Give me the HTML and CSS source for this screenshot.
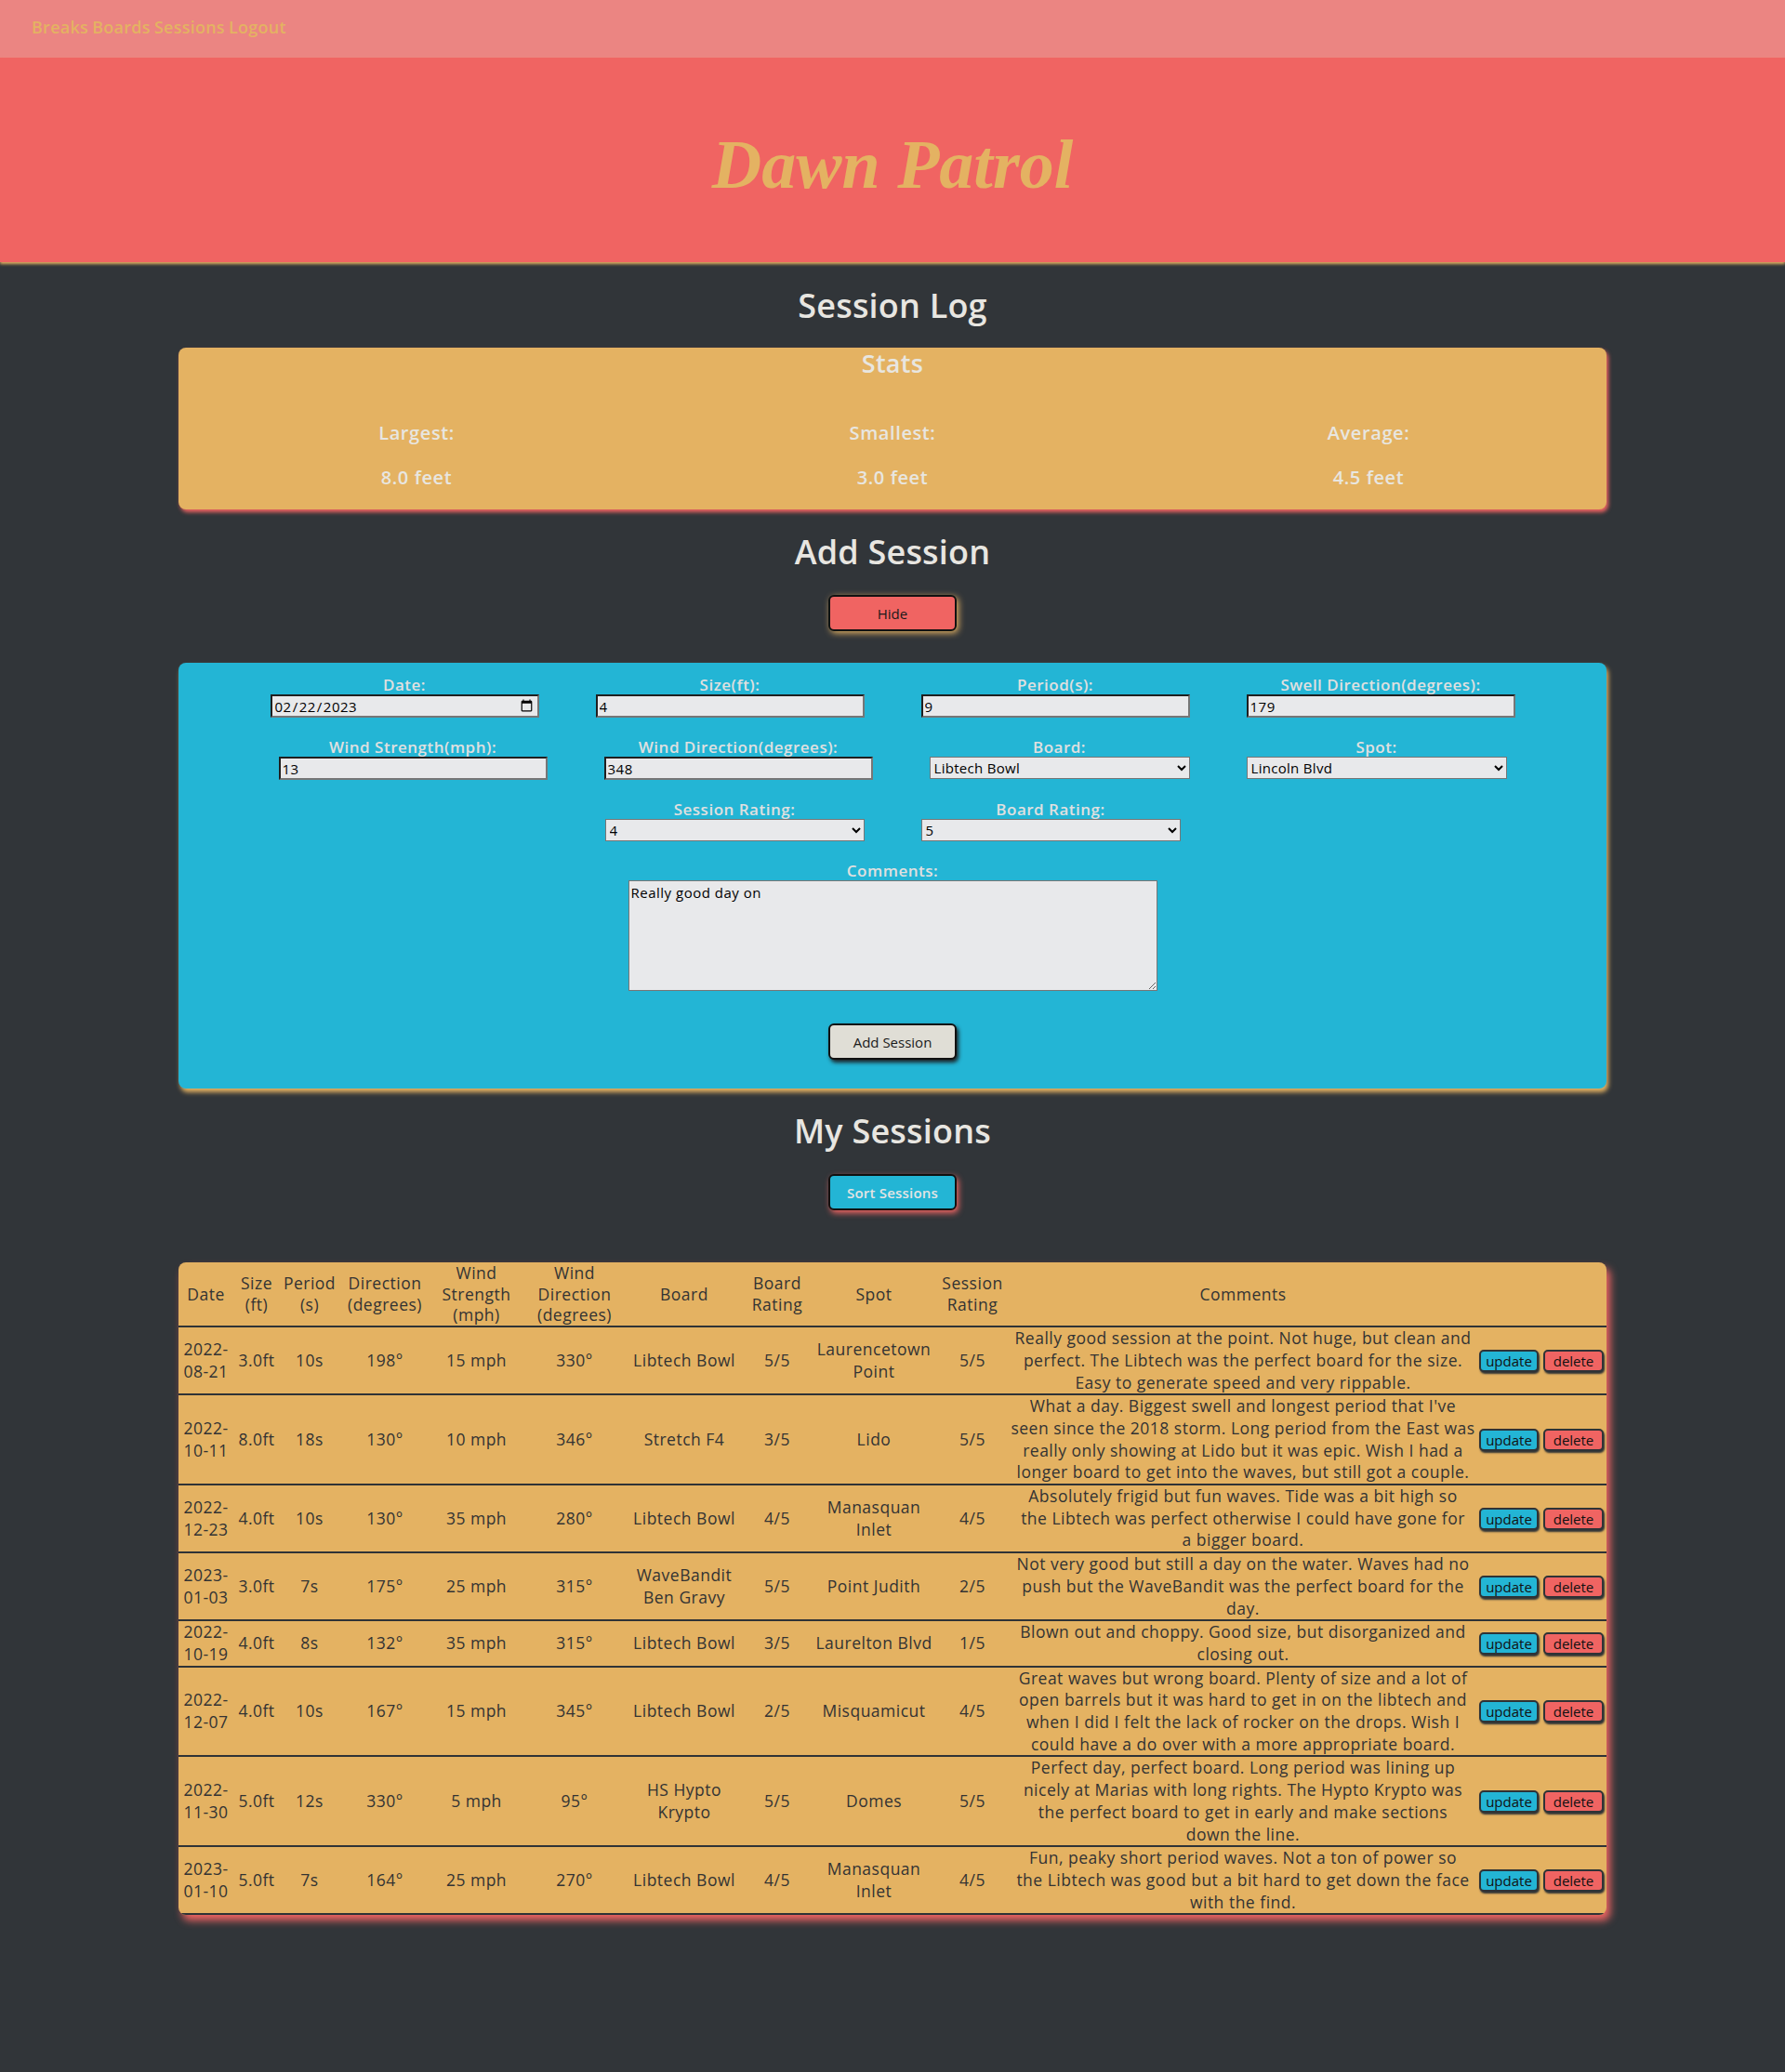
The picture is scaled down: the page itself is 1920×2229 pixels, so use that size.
FILE: index.html
```html
<!DOCTYPE html>
<html lang="en">
<head>
<meta charset="utf-8">
<title>Dawn Patrol</title>
<link rel="stylesheet" href="styles.css">
</head>
<body>
<nav class="topnav">
  <a class="nav-link" href="#">Breaks</a> <a class="nav-link" href="#">Boards</a> <a class="nav-link" href="#">Sessions</a> <a class="nav-link" href="#">Logout</a>
</nav>
<header class="banner">
  <h1 class="brand">Dawn Patrol</h1>
</header>
<main class="page">
  <h2 class="section-title title-log">Session Log</h2>
  <section class="stats-card">
    <h3 class="stats-title">Stats</h3>
    <div class="stats-grid">
      <div class="stat"><p class="stat-label">Largest:</p><p class="stat-value">8.0 feet</p></div>
      <div class="stat"><p class="stat-label">Smallest:</p><p class="stat-value">3.0 feet</p></div>
      <div class="stat"><p class="stat-label">Average:</p><p class="stat-value">4.5 feet</p></div>
    </div>
  </section>

  <h2 class="section-title">Add Session</h2>
  <div class="btn-row"><button class="btn btn-hide" type="button">Hide</button></div>

  <form class="session-form">
    <div class="form-row">
      <div class="field"><label class="field-label">Date:</label><input class="control" type="date" value="2023-02-22"></div>
      <div class="field"><label class="field-label">Size(ft):</label><input class="control" type="text" value="4"></div>
      <div class="field"><label class="field-label">Period(s):</label><input class="control" type="text" value="9"></div>
      <div class="field"><label class="field-label">Swell Direction(degrees):</label><input class="control" type="text" value="179"></div>
    </div>
    <div class="form-row">
      <div class="field"><label class="field-label">Wind Strength(mph):</label><input class="control" type="text" value="13"></div>
      <div class="field"><label class="field-label">Wind Direction(degrees):</label><input class="control" type="text" value="348"></div>
      <div class="field"><label class="field-label">Board:</label><select class="picker"><option>Libtech Bowl</option></select></div>
      <div class="field"><label class="field-label">Spot:</label><select class="picker"><option>Lincoln Blvd</option></select></div>
    </div>
    <div class="form-row">
      <div class="field"><label class="field-label">Session Rating:</label><select class="picker picker-sm"><option>4</option></select></div>
      <div class="field"><label class="field-label">Board Rating:</label><select class="picker picker-sm"><option>5</option></select></div>
    </div>
    <div class="form-row">
      <div class="field"><label class="field-label">Comments:</label><textarea class="comments-box">Really good day on</textarea></div>
    </div>
    <div class="btn-row btn-row-form"><button class="btn btn-add" type="button">Add Session</button></div>
  </form>

  <h2 class="section-title">My Sessions</h2>
  <div class="btn-row"><button class="btn btn-sort" type="button">Sort Sessions</button></div>

  <div class="table-card">
    <table class="sessions">
      <thead>
        <tr>
          <th class="c-date">Date</th>
          <th class="c-size">Size (ft)</th>
          <th class="c-period">Period (s)</th>
          <th class="c-dir">Direction (degrees)</th>
          <th class="c-ws">Wind Strength (mph)</th>
          <th class="c-wd">Wind Direction (degrees)</th>
          <th class="c-board">Board</th>
          <th class="c-br">Board Rating</th>
          <th class="c-spot">Spot</th>
          <th class="c-sr">Session Rating</th>
          <th class="c-comments">Comments</th>
          <th class="c-actions"></th>
        </tr>
      </thead>
      <tbody>
        <tr>
          <td>2022-08-21</td><td>3.0ft</td><td>10s</td><td>198°</td><td>15 mph</td><td>330°</td><td>Libtech Bowl</td><td>5/5</td><td>Laurencetown Point</td><td>5/5</td>
          <td>Really good session at the point. Not huge, but clean and<br>perfect. The Libtech was the perfect board for the size.<br>Easy to generate speed and very rippable.</td>
          <td><div class="actions"><button class="row-btn row-update" type="button">update</button><button class="row-btn row-delete" type="button">delete</button></div></td>
        </tr>
        <tr>
          <td>2022-10-11</td><td>8.0ft</td><td>18s</td><td>130°</td><td>10 mph</td><td>346°</td><td>Stretch F4</td><td>3/5</td><td>Lido</td><td>5/5</td>
          <td>What a day. Biggest swell and longest period that I've<br>seen since the 2018 storm. Long period from the East was<br>really only showing at Lido but it was epic. Wish I had a<br>longer board to get into the waves, but still got a couple.</td>
          <td><div class="actions"><button class="row-btn row-update" type="button">update</button><button class="row-btn row-delete" type="button">delete</button></div></td>
        </tr>
        <tr>
          <td>2022-12-23</td><td>4.0ft</td><td>10s</td><td>130°</td><td>35 mph</td><td>280°</td><td>Libtech Bowl</td><td>4/5</td><td>Manasquan Inlet</td><td>4/5</td>
          <td>Absolutely frigid but fun waves. Tide was a bit high so<br>the Libtech was perfect otherwise I could have gone for<br>a bigger board.</td>
          <td><div class="actions"><button class="row-btn row-update" type="button">update</button><button class="row-btn row-delete" type="button">delete</button></div></td>
        </tr>
        <tr>
          <td>2023-01-03</td><td>3.0ft</td><td>7s</td><td>175°</td><td>25 mph</td><td>315°</td><td>WaveBandit Ben Gravy</td><td>5/5</td><td>Point Judith</td><td>2/5</td>
          <td>Not very good but still a day on the water. Waves had no<br>push but the WaveBandit was the perfect board for the<br>day.</td>
          <td><div class="actions"><button class="row-btn row-update" type="button">update</button><button class="row-btn row-delete" type="button">delete</button></div></td>
        </tr>
        <tr>
          <td>2022-10-19</td><td>4.0ft</td><td>8s</td><td>132°</td><td>35 mph</td><td>315°</td><td>Libtech Bowl</td><td>3/5</td><td>Laurelton Blvd</td><td>1/5</td>
          <td>Blown out and choppy. Good size, but disorganized and<br>closing out.</td>
          <td><div class="actions"><button class="row-btn row-update" type="button">update</button><button class="row-btn row-delete" type="button">delete</button></div></td>
        </tr>
        <tr>
          <td>2022-12-07</td><td>4.0ft</td><td>10s</td><td>167°</td><td>15 mph</td><td>345°</td><td>Libtech Bowl</td><td>2/5</td><td>Misquamicut</td><td>4/5</td>
          <td>Great waves but wrong board. Plenty of size and a lot of<br>open barrels but it was hard to get in on the libtech and<br>when I did I felt the lack of rocker on the drops. Wish I<br>could have a do over with a more appropriate board.</td>
          <td><div class="actions"><button class="row-btn row-update" type="button">update</button><button class="row-btn row-delete" type="button">delete</button></div></td>
        </tr>
        <tr>
          <td>2022-11-30</td><td>5.0ft</td><td>12s</td><td>330°</td><td>5 mph</td><td>95°</td><td>HS Hypto Krypto</td><td>5/5</td><td>Domes</td><td>5/5</td>
          <td>Perfect day, perfect board. Long period was lining up<br>nicely at Marias with long rights. The Hypto Krypto was<br>the perfect board to get in early and make sections<br>down the line.</td>
          <td><div class="actions"><button class="row-btn row-update" type="button">update</button><button class="row-btn row-delete" type="button">delete</button></div></td>
        </tr>
        <tr>
          <td>2023-01-10</td><td>5.0ft</td><td>7s</td><td>164°</td><td>25 mph</td><td>270°</td><td>Libtech Bowl</td><td>4/5</td><td>Manasquan Inlet</td><td>4/5</td>
          <td>Fun, peaky short period waves. Not a ton of power so<br>the Libtech was good but a bit hard to get down the face<br>with the find.</td>
          <td><div class="actions"><button class="row-btn row-update" type="button">update</button><button class="row-btn row-delete" type="button">delete</button></div></td>
        </tr>
      </tbody>
    </table>
  </div>
</main>
</body>
</html>
```
FILE: styles.css
```css
* { box-sizing: border-box; }

html, body {
  margin: 0;
  padding: 0;
  background: #313539;
}

body {
  font-family: "Open Sans", Lato, sans-serif;
  color: #333;
  min-height: 2229px;
}

/* top nav */
.topnav {
  height: 62px;
  background: #eb8582;
  padding: 18px 0 0 34px;
  line-height: 22px;
}
.nav-link {
  color: #e4b262;
  font-size: 18px;
  font-weight: 600;
  letter-spacing: 0.25px;
  text-decoration: none;
}

/* banner */
.banner {
  height: 220px;
  background: #f06462;
  box-shadow: 0 2px 3px #e4b262;
  padding-top: 78px;
  text-align: center;
}
.brand {
  margin: 0;
  font-family: "Liberation Serif", "DejaVu Serif", serif;
  font-style: italic;
  font-weight: 700;
  font-size: 74px;
  line-height: 1;
  color: #e4b262;
}

/* page */
.page {
  width: 80%;
  margin: 0 auto;
}

.section-title {
  margin: 24px 0 25px;
  font-size: 36px;
  line-height: 43px;
  font-weight: 600;
  letter-spacing: 0.2px;
  text-align: center;
  color: #e8e6e1;
}
.title-log {
  margin-top: 25px;
  margin-bottom: 24px;
}

/* stats */
.stats-card {
  background: #e4b262;
  border-radius: 8px;
  padding: 1px 0 23px;
  box-shadow: 2px 3px 4px #f06462;
  color: #e8e6e0;
  text-align: center;
}
.stats-title {
  margin: 0;
  font-size: 27px;
  line-height: 32px;
  font-weight: 600;
  letter-spacing: 0.3px;
}
.stats-grid {
  display: grid;
  grid-template-columns: repeat(3, 1fr);
  margin-top: 48px;
}
.stat-label,
.stat-value {
  margin: 0;
  font-size: 20px;
  line-height: 22px;
  font-weight: 600;
  letter-spacing: 0.6px;
}
.stat-value {
  margin-top: 26px;
}

/* buttons */
.btn-row {
  display: flex;
  justify-content: center;
}
.btn {
  width: 138px;
  height: 39px;
  border: 2px solid #111;
  border-radius: 6px;
  font-family: "Open Sans", Lato, sans-serif;
  font-size: 15px;
  color: #1a1a1a;
  cursor: pointer;
}
.btn-hide {
  background: #f06462;
  box-shadow: 2px 2px 7px #e4b262;
}
.btn-add {
  background: #e0ded6;
  box-shadow: 2px 3px 4px #1e2124;
}
.btn-sort {
  background: #23b5d5;
  color: #e4e4e4;
  font-weight: 600;
  font-size: 15px;
  letter-spacing: 0.2px;
  box-shadow: 2px 3px 6px #f06462;
}

/* form */
.session-form {
  margin-top: 34px;
  background: #23b5d5;
  border-radius: 8px;
  padding: 13px 0 31px;
  box-shadow: 2px 4px 5px #e4b262;
}
.form-row {
  display: flex;
  justify-content: center;
  gap: 61px;
  margin-bottom: 21px;
}
.field {
  display: flex;
  flex-direction: column;
  align-items: center;
}
.field-label {
  font-size: 17px;
  line-height: 21px;
  font-weight: 600;
  letter-spacing: 0.5px;
  color: #e0e0e0;
}
.control {
  width: 289px;
  height: 25px;
  padding: 0 2px;
  background: #e8e9eb;
  border: 2px solid;
  border-color: #1f1f1f #767676 #767676 #1f1f1f;
  font-family: "Open Sans", Lato, sans-serif;
  font-size: 15px;
  letter-spacing: 0.5px;
  color: #000;
}
.picker {
  width: 280px;
  height: 24px;
  background: #e8e9eb;
  border: 1px solid #767676;
  font-family: "Open Sans", Lato, sans-serif;
  font-size: 15px;
  letter-spacing: 0.3px;
  color: #000;
}
.picker-sm {
  width: 279px;
}
.comments-box {
  width: 569px;
  height: 119px;
  padding: 2px;
  background: #e8e9eb;
  border: 1px solid #767676;
  font-family: "Open Sans", Lato, sans-serif;
  font-size: 15px;
  letter-spacing: 0.5px;
  color: #000;
}
.btn-row-form {
  margin-top: 35px;
}

/* table */
.table-card {
  margin-top: 56px;
  background: #e4b262;
  border-radius: 8px;
  overflow: hidden;
  box-shadow: 4px 6px 8px #f06462;
}
.sessions {
  width: 100%;
  border-collapse: collapse;
  table-layout: fixed;
}
.sessions th,
.sessions td {
  padding: 0;
  font-size: 17.5px;
  line-height: 23.7px;
  font-weight: 400;
  letter-spacing: 0.5px;
  text-align: center;
  vertical-align: middle;
  color: #333;
  border-bottom: 2px solid #2f3336;
}
.sessions th {
  line-height: 22.7px;
}
.c-date { width: 59px; }
.c-size { width: 50px; }
.c-period { width: 64px; }
.c-dir { width: 98px; }
.c-ws { width: 99px; }
.c-wd { width: 112px; }
.c-board { width: 124px; }
.c-br { width: 76px; }
.c-spot { width: 132px; }
.c-sr { width: 80px; }
.c-comments { width: 502px; }
.c-actions { width: 140px; }

.actions {
  display: flex;
  gap: 5px;
  padding-left: 3px;
}
.row-btn {
  height: 24px;
  padding: 0;
  border: 2px solid #2f3336;
  border-radius: 5px;
  font-family: "Open Sans", Lato, sans-serif;
  font-size: 15px;
  line-height: 18px;
  color: #111;
  box-shadow: 1px 2px 2px #2f3336;
  cursor: pointer;
}
.row-update {
  width: 64px;
  background: #23b5d5;
}
.row-delete {
  width: 65px;
  background: #f06462;
}
```
